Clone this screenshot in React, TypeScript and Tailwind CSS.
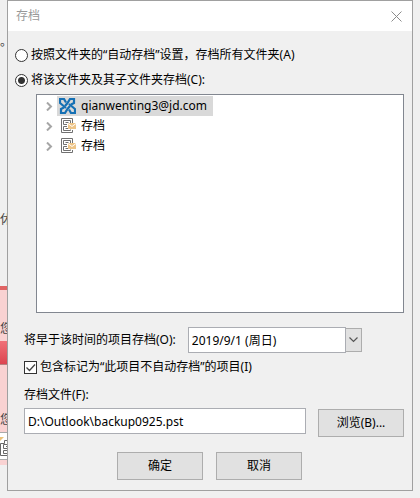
import React from 'react';

const folders = [
  { name: 'qianwenting3@jd.com', kind: 'exchange', selected: true },
  { name: '存档', kind: 'archive', selected: false },
  { name: '存档', kind: 'archive', selected: false },
];

function ExchangeIcon() {
  return (
    <svg width="17" height="16" viewBox="0 0 17 16" className="shrink-0">
      <g fill="none" stroke="#1570b4" strokeWidth="2.2">
        <path d="M7 4.5L5 1H1v4l3 2.5 3 2.5" />
        <path d="M12 6.5L15 5V1h-4L8.5 5 6 8" />
        <path d="M10 11.5l2 3.5h4v-4l-3-2.5L10 6" />
        <path d="M5 9.5L2 11v4h4l2.5-4L11 8" />
      </g>
    </svg>
  );
}

function ArchiveIcon() {
  return (
    <svg width="17" height="16" viewBox="0 0 17 16" className="shrink-0">
      <g fill="none" stroke="#707070">
        <path d="M13.5 5V.5h-11v14h11V12" />
        <path d="M8 6.5H4.5v-4h7V5M6.5 4.5h3" />
        <path d="M11.5 11.5v1h-7v-4H8M6.5 10.5H9" />
      </g>
      <path fill="#eec588" d="M9 5h8v6H9z" />
      <path fill="none" stroke="#fff" d="M9 5.5l4 3 4-3" />
    </svg>
  );
}

function InboxEdgeIcon() {
  return (
    <svg width="8" height="22" viewBox="0 0 8 22">
      <path fill="#ecc27a" d="M0 0h4L0 4z" />
      <g fill="none" stroke="#686868">
        <path d="M8 3.5H4.5v3H.5v12H8" />
        <path d="M8 7.5H3.5v4H8M8 13.5H3.5v3H8M6 9.5h2" />
      </g>
    </svg>
  );
}

// Sliver of the mail window that stays visible left of the dialog
function BackgroundStrip() {
  return (
    <div aria-hidden="true" className="w-[7px] shrink-0 whitespace-nowrap text-[#444]">
      <div className="h-[286px] pt-8">
        <div className="h-44">
          <span className="block leading-5">。</span>
        </div>
        <span className="block h-6 leading-6">休</span>
      </div>
      <div className="h-[179px] border-t-4 border-[#e06464] bg-[#f9d2d2] pt-[31px]">
        <span className="block h-5 leading-4">您</span>
        <div className="h-6 border-b border-[#b98080] bg-linear-to-b from-[#f07078] to-[#dc4450]" />
        <span className="mt-[47px] block h-5 leading-4">您</span>
        <div className="h-7 border-y border-[#aaa] bg-white pt-1">
          <InboxEdgeIcon />
        </div>
      </div>
    </div>
  );
}

export default function App() {
  return (
    <div className="flex min-h-screen items-start bg-[#f0f0f0] pr-[7px] font-['Noto_Sans','Noto_Sans_CJK_SC',sans-serif] text-xs text-black">
      <BackgroundStrip />
      <main className="relative z-10 min-w-0 flex-1 border border-[#a0a0a0] bg-[#f0f0f0]">
        <header className="flex h-[30px] items-center justify-between bg-white pr-2.5 pl-2">
          <h1 className="text-[#999]">存档</h1>
          <button type="button" aria-label="关闭">
            <svg width="11" height="11" viewBox="0 0 11 11" stroke="#8c8c8c" strokeWidth="1">
              <path d="M.5.5l10 10M10.5.5l-10 10" />
            </svg>
          </button>
        </header>

        <form className="pt-3 pr-2 pb-2.5 pl-[7px]">
          <label className="flex h-6 items-center gap-[3px]">
            <input
              type="radio"
              name="scope"
              className="size-[13px] appearance-none rounded-full border border-[#333] bg-white checked:bg-[radial-gradient(circle,#333_0_3px,#fff_4px)]"
            />
            按照文件夹的“自动存档”设置，存档所有文件夹(A)
          </label>
          <label className="flex h-[26px] items-center gap-[3px]">
            <input
              type="radio"
              name="scope"
              defaultChecked
              className="size-[13px] appearance-none rounded-full border border-[#333] bg-white checked:bg-[radial-gradient(circle,#333_0_3px,#fff_4px)]"
            />
            将该文件夹及其子文件夹存档(C):
          </label>

          {/* Folder tree */}
          <ul className="mt-px ml-[21px] h-[219px] border border-[#828790] bg-white pt-px">
            {folders.map((folder, index) => (
              <li key={index} className="flex h-5 items-center pl-2">
                <svg width="8" height="9" viewBox="0 0 8 9" fill="none" stroke="#a6a6a6" strokeWidth="2">
                  <path d="M2 .5l4 4-4 4" />
                </svg>
                <div className={folder.selected ? 'ml-1 flex h-5 items-center gap-[5px] bg-[#d9d9d9] pr-1.5 pl-0.5' : 'ml-1 flex h-5 items-center gap-[5px] pl-0.5'}>
                  {folder.kind === 'exchange' ? <ExchangeIcon /> : <ArchiveIcon />}
                  {folder.name}
                </div>
              </li>
            ))}
          </ul>

          <div className="pl-[9px]">
            <div className="mt-3.5 flex h-[26px] items-center">
              <label htmlFor="before" className="mr-3">
                将早于该时间的项目存档(O):
              </label>
              <input
                id="before"
                type="text"
                defaultValue="2019/9/1 (周日)"
                className="h-[26px] w-[158px] border border-[#abadb3] bg-white px-[3px]"
              />
              <button
                type="button"
                aria-label="选择日期"
                className="flex h-6 w-4 items-center justify-center border border-l-0 border-[#adadad] bg-[#e1e1e1]"
              >
                <svg width="9" height="6" viewBox="0 0 9 6" fill="none" stroke="#555" strokeWidth="1.2">
                  <path d="M.5.5l4 4 4-4" />
                </svg>
              </button>
            </div>

            <label className="mt-0.5 flex h-6 items-center gap-[3px]">
              <span className="relative flex">
                <input
                  type="checkbox"
                  defaultChecked
                  className="peer size-[13px] appearance-none border border-[#333] bg-white"
                />
                <svg
                  viewBox="0 0 13 13"
                  className="pointer-events-none invisible absolute inset-0 peer-checked:visible"
                  fill="none"
                  stroke="#444"
                  strokeWidth="1.3"
                >
                  <path d="M2.5 6.5l3 3 5.5-6" />
                </svg>
              </span>
              包含标记为“此项目不自动存档”的项目(I)
            </label>

            <label htmlFor="file" className="mt-1.5 block leading-5">
              存档文件(F):
            </label>
            <div className="mt-[3px] flex items-start gap-3">
              <input
                id="file"
                type="text"
                defaultValue="D:\Outlook\backup0925.pst"
                className="h-[26px] min-w-0 flex-1 border border-[#abadb3] bg-white px-[3px]"
              />
              <button type="button" className="mt-px h-7 w-[86px] border border-[#adadad] bg-[#e1e1e1]">
                浏览(B)...
              </button>
            </div>
          </div>

          <div className="mt-[15px] flex justify-center gap-[13px]">
            <button type="submit" className="h-7 w-[86px] border border-[#adadad] bg-[#e1e1e1]">
              确定
            </button>
            <button type="button" className="h-7 w-[86px] border border-[#adadad] bg-[#e1e1e1]">
              取消
            </button>
          </div>
        </form>
      </main>
    </div>
  );
}
